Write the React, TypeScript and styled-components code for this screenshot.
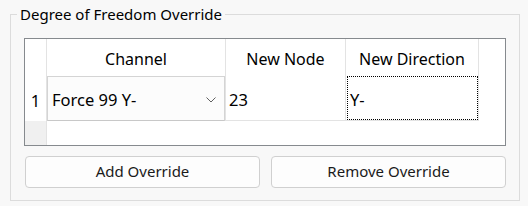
import React from 'react';
import styled, { createGlobalStyle } from 'styled-components';

const GlobalStyle = createGlobalStyle`
  html, body {
    margin: 0;
    padding: 0;
    background: #f8f8f8;
    font-family: "Segoe UI", "Noto Sans", "Open Sans", sans-serif;
    font-size: 15px;
    color: #000;
  }
`;

const GroupBox = styled.fieldset`
  box-sizing: border-box;
  width: 510px;
  margin: 5px 0 0 10px;
  padding: 14px 13px 12px 13px;
  border: 1px solid #dcdcdc;
  background: #f8f8f8;
  min-width: 0;
`;

const Legend = styled.legend`
  margin-left: -7px;
  padding: 0 3px;
  line-height: 19px;
  font-size: 15px;
`;

const Grid = styled.div`
  box-sizing: border-box;
  width: 482px;
  border: 1px solid #868a8e;
  background: #fff;
  display: grid;
  grid-template-columns: 22px 179px 120px 133px 26px;
  grid-template-rows: 37px 45px 24px;
  font-size: 16.5px;
`;

const HeaderCell = styled.div<{ $last?: boolean }>`
  box-sizing: border-box;
  display: flex;
  align-items: center;
  justify-content: center;
  border-right: ${(p) => (p.$last ? 'none' : '1px solid #e3e3e3')};
  padding-top: 2px;
  font-size: 16px;
`;

const RowHeader = styled.div`
  box-sizing: border-box;
  display: flex;
  align-items: center;
  justify-content: center;
  border-right: 1px solid #e3e3e3;
  padding-top: 3px;
`;

const Cell = styled.div<{ $last?: boolean }>`
  box-sizing: border-box;
  display: flex;
  align-items: center;
  padding: 3px 0 0 3px;
  border-right: ${(p) => (p.$last ? 'none' : '1px solid #e3e3e3')};
  border-bottom: ${(p) => (p.$last ? 'none' : '1px solid #e3e3e3')};
`;

const ComboCell = styled.div`
  box-sizing: border-box;
  border-right: 1px solid #e3e3e3;
`;

const Combo = styled.div`
  box-sizing: border-box;
  height: 45px;
  display: flex;
  align-items: center;
  justify-content: space-between;
  padding: 2px 8px 0 4px;
  background: #fcfcfc;
  border: 1px solid #d4d4d4;
  border-bottom-color: #c8c8c8;
`;

const FocusCell = styled.div`
  box-sizing: border-box;
  border-right: 1px solid #e3e3e3;
  border-bottom: 1px solid #e3e3e3;
  padding: 0 0 0 1px;
`;

const FocusBox = styled.div`
  box-sizing: border-box;
  height: 44px;
  border: 1px dotted #000;
  display: flex;
  align-items: center;
  padding: 3px 0 0 2px;
`;

const EmptyHeader = styled.div`
  background: #f0f0f0;
  border-right: 1px solid #e3e3e3;
`;

const Blank = styled.div``;

const ButtonRow = styled.div`
  display: grid;
  grid-template-columns: 235px 235px;
  gap: 11px;
  margin: 10px 0 0 1px;
`;

const Button = styled.button`
  box-sizing: border-box;
  height: 32px;
  background: #fdfdfd;
  border: 1px solid #d0d0d0;
  border-radius: 4px;
  font-family: inherit;
  font-size: 15px;
  color: #1a1a1a;
  padding: 0 0 2px;
`;

const Chevron = () => (
  <svg width="10" height="6" viewBox="0 0 10 6">
    <polyline points="0.5,0.5 5,5 9.5,0.5" fill="none" stroke="#606060" strokeWidth="1" />
  </svg>
);

export default function App() {
  return (
    <>
      <GlobalStyle />
      <GroupBox>
        <Legend>Degree of Freedom Override</Legend>
        <Grid>
          <RowHeader />
          <HeaderCell>Channel</HeaderCell>
          <HeaderCell>New Node</HeaderCell>
          <HeaderCell>New Direction</HeaderCell>
          <HeaderCell $last />

          <RowHeader>1</RowHeader>
          <ComboCell>
            <Combo>
              <span>Force 99 Y-</span>
              <Chevron />
            </Combo>
          </ComboCell>
          <Cell>23</Cell>
          <FocusCell>
            <FocusBox>Y-</FocusBox>
          </FocusCell>
          <Cell $last />

          <EmptyHeader />
          <Blank />
          <Blank />
          <Blank />
          <Blank />
        </Grid>
        <ButtonRow>
          <Button>Add Override</Button>
          <Button>Remove Override</Button>
        </ButtonRow>
      </GroupBox>
    </>
  );
}
